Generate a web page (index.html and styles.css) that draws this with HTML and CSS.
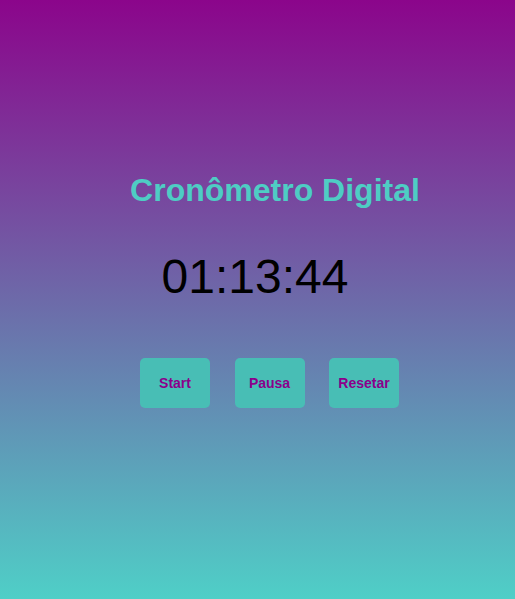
FILE: index.html
```html
<!DOCTYPE html>
<html lang="pt">
<head>
<meta charset="utf-8">
<title>Cronômetro Digital</title>
<link rel="stylesheet" href="styles.css">
</head>
<body>
<main class="app">
  <h1 class="title">Cronômetro Digital</h1>
  <div class="display">01:13:44</div>
  <div class="controls">
    <button class="btn">Start</button>
    <button class="btn">Pausa</button>
    <button class="btn">Resetar</button>
  </div>
</main>
</body>
</html>
```
FILE: styles.css
```css
html, body {
  margin: 0;
  padding: 0;
}
body {
  min-height: 100vh;
  background: linear-gradient(to bottom, #8b058b 0%, #4fcfc7 100%);
  font-family: "Liberation Sans", Arial, sans-serif;
}
.app {
  display: flex;
  flex-direction: column;
  align-items: center;
  padding-top: 172px;
}
.title {
  margin: 0;
  padding-left: 35px;
  font-size: 32px;
  font-weight: bold;
  line-height: 37px;
  color: #4ecdc4;
}
.display {
  margin-top: 40px;
  margin-right: 5px;
  font-size: 48px;
  line-height: 55px;
  color: #000;
}
.controls {
  display: flex;
  gap: 24.5px;
  margin-top: 54px;
  margin-left: 24px;
}
.btn {
  width: 70px;
  height: 50px;
  padding: 0;
  border: none;
  border-radius: 5px;
  background: #48beb5;
  color: #8b008b;
  font-family: "Liberation Sans", Arial, sans-serif;
  font-size: 14px;
  font-weight: bold;
}
```
